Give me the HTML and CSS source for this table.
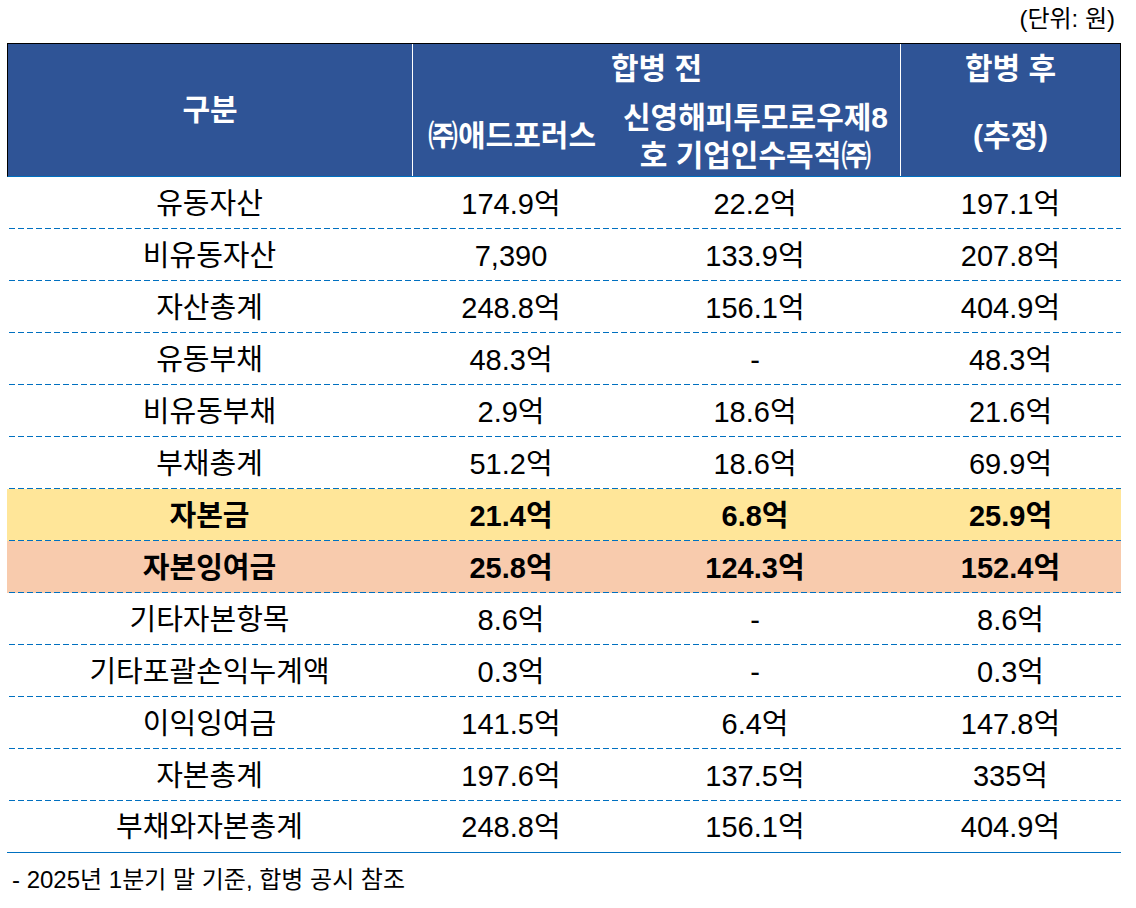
FILE: index.html
```html
<!DOCTYPE html>
<html lang="ko">
<head>
<meta charset="utf-8">
<title>합병 전후 재무 비교</title>
<link rel="stylesheet" href="styles.css">
</head>
<body>
<div class="page">
  <div class="unit">(단위: 원)</div>
  <div class="fin">
    <div class="head">
      <div class="hc gubun divr">구분</div>
      <div class="hc before divr">합병 전</div>
      <div class="hc after">합병 후</div>
      <div class="hc sub">㈜애드포러스</div>
      <div class="hc sub two divr"><span class="ln">신영해피투모로우제8</span><span class="ln">호 기업인수목적㈜</span></div>
      <div class="hc sub">(추정)</div>
    </div>
    <div class="row"><div>유동자산</div><div>174.9억</div><div>22.2억</div><div>197.1억</div></div>
    <div class="row"><div>비유동자산</div><div>7,390</div><div>133.9억</div><div>207.8억</div></div>
    <div class="row"><div>자산총계</div><div>248.8억</div><div>156.1억</div><div>404.9억</div></div>
    <div class="row"><div>유동부채</div><div>48.3억</div><div>-</div><div>48.3억</div></div>
    <div class="row"><div>비유동부채</div><div>2.9억</div><div>18.6억</div><div>21.6억</div></div>
    <div class="row"><div>부채총계</div><div>51.2억</div><div>18.6억</div><div>69.9억</div></div>
    <div class="row hl-yellow"><div>자본금</div><div>21.4억</div><div>6.8억</div><div>25.9억</div></div>
    <div class="row hl-orange"><div>자본잉여금</div><div>25.8억</div><div>124.3억</div><div>152.4억</div></div>
    <div class="row"><div>기타자본항목</div><div>8.6억</div><div>-</div><div>8.6억</div></div>
    <div class="row"><div>기타포괄손익누계액</div><div>0.3억</div><div>-</div><div>0.3억</div></div>
    <div class="row"><div>이익잉여금</div><div>141.5억</div><div>6.4억</div><div>147.8억</div></div>
    <div class="row"><div>자본총계</div><div>197.6억</div><div>137.5억</div><div>335억</div></div>
    <div class="row final"><div>부채와자본총계</div><div>248.8억</div><div>156.1억</div><div>404.9억</div></div>
  </div>
  <div class="note">- 2025년 1분기 말 기준, 합병 공시 참조</div>
</div>
</body>
</html>
```

FILE: styles.css
```css
html, body {
  margin: 0;
  padding: 0;
  background: #ffffff;
}

body {
  font-family: "Liberation Sans", "Noto Sans CJK KR", sans-serif;
  color: #000000;
}

.page {
  width: 1136px;
  padding: 0 0 0 7px;
  box-sizing: border-box;
}

.unit {
  width: 1114px;
  height: 43px;
  overflow: hidden;
  box-sizing: border-box;
  text-align: right;
  font-size: 24px;
  line-height: 38px;
  padding-right: 6px;
}

.fin {
  width: 1114px;
}

/* header */
.head {
  display: grid;
  grid-template-columns: 405px 198px 290px 219px;
  grid-template-rows: 49px 83px;
  box-sizing: border-box;
  width: 1114px;
  background: #2f5496;
  border-top: 1px solid #000000;
  border-left: 1px solid #000000;
  border-right: 1px solid #000000;
  border-bottom: 1px solid #0070c0;
  color: #ffffff;
  font-weight: 700;
  font-size: 30px;
}

.hc {
  display: flex;
  flex-direction: column;
  align-items: center;
  justify-content: center;
  box-sizing: border-box;
  line-height: 38px;
  white-space: nowrap;
}

.hc.divr {
  border-right: 1px solid #ffffff;
}

.gubun {
  grid-column: 1;
  grid-row: 1 / 3;
}

.before {
  grid-column: 2 / 4;
  grid-row: 1;
}

.after {
  grid-column: 4;
  grid-row: 1;
}

.sub {
  grid-row: 2;
  padding-top: 2px;
}

.sub.two {
  padding-top: 4px;
}

.ln {
  display: block;
  height: 38px;
  line-height: 38px;
}

/* body rows */
.row {
  display: grid;
  grid-template-columns: 405px 198px 290px 221px;
  align-items: center;
  height: 52px;
  box-sizing: border-box;
  padding: 2px 0 1px;
  font-size: 29px;
  line-height: 32px;
  text-align: center;
  white-space: nowrap;
  background-image: linear-gradient(to right, #0070c0 6px, rgba(0, 112, 192, 0) 6px);
  background-size: 9px 1px;
  background-repeat: repeat-x;
  background-position: 2px 100%;
}

.row.hl-yellow {
  background-color: #ffe699;
  font-weight: 700;
}

.row.hl-orange {
  background-color: #f8cbad;
  font-weight: 700;
}

.row.final {
  background-image: none;
  border-bottom: 1px solid #0070c0;
}

.note {
  font-size: 24px;
  line-height: 30px;
  padding: 12px 0 0 5px;
}
```
